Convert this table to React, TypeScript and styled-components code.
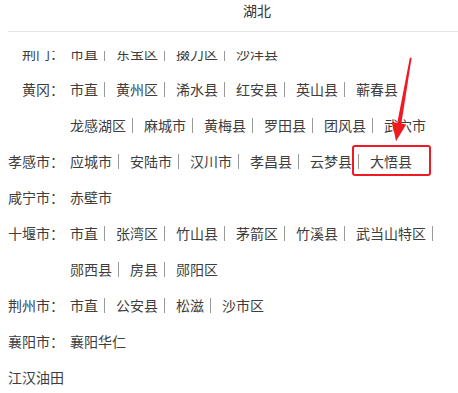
import React from 'react';
import styled, { createGlobalStyle } from 'styled-components';

interface District {
    name: string;
    noSep?: boolean;
    marked?: boolean;
}

interface City {
    label: string;
    districts: District[];
}

const d = (name: string, extra: Partial<District> = {}): District => ({ name, ...extra });

const CITIES: City[] = [
    { label: '荆门：', districts: [d('市直'), d('东宝区'), d('掇刀区'), d('沙洋县')] },
    {
        label: '黄冈：',
        districts: [
            d('市直'), d('黄州区'), d('浠水县'), d('红安县'), d('英山县'), d('蕲春县', { noSep: true }),
            d('龙感湖区'), d('麻城市'), d('黄梅县'), d('罗田县'), d('团风县'), d('武穴市'),
        ],
    },
    {
        label: '孝感市：',
        districts: [d('应城市'), d('安陆市'), d('汉川市'), d('孝昌县'), d('云梦县'), d('大悟县', { marked: true })],
    },
    { label: '咸宁市：', districts: [d('赤壁市')] },
    {
        label: '十堰市：',
        districts: [
            d('市直'), d('张湾区'), d('竹山县'), d('茅箭区'), d('竹溪县'), d('武当山特区'),
            d('郧西县'), d('房县'), d('郧阳区'),
        ],
    },
    { label: '荆州市：', districts: [d('市直'), d('公安县'), d('松滋'), d('沙市区')] },
    { label: '襄阳市：', districts: [d('襄阳华仁')] },
    { label: '江汉油田', districts: [] },
];

const App = (): JSX.Element => {
    const renderDistricts = (districts: District[]) => {
        return districts.map((item, i) => {
            const last = i === districts.length - 1;
            return (
                <DistrictItem key={item.name + i} $marked={item.marked}>
                    {item.name}
                    {!last && !item.noSep && <Sep />}
                </DistrictItem>
            );
        });
    };

    return (
        <>
            <GlobalStyle />
            <Page>
                <Panel>
                    <Header>湖北</Header>

                    <Viewport>
                        <List>
                            {CITIES.map((city) => (
                                <Row key={city.label}>
                                    <Label>{city.label}</Label>
                                    <Districts>{renderDistricts(city.districts)}</Districts>
                                </Row>
                            ))}
                        </List>
                    </Viewport>
                </Panel>

                {/* hand-drawn pointer towards the boxed county */}
                <Arrow viewBox="0 0 458 393" width={458} height={393}>
                    <polygon
                        points="409.9,57.6 411.6,57.9 401.4,123.4 406.2,124.4 396,141.2 392.1,121.9 397.3,122.8"
                        fill="#ee1b22"
                    />
                </Arrow>
            </Page>
        </>
    );
};

const GlobalStyle = createGlobalStyle`
    html, body {
        margin: 0;
        padding: 0;
        background: #fff;
        overflow: hidden;
    }

    body {
        font-family: "Noto Sans CJK SC", "Noto Sans", sans-serif;
    }
`;

const Page = styled.div`
    position: relative;
    width: 458px;
    height: 393px;
    overflow: hidden;
`;

const Panel = styled.div`
    margin-left: 8px;
    width: 498px;
`;

const Header = styled.div`
    height: 31px;
    line-height: 20px;
    font-size: 14px;
    color: #333;
    text-align: center;
    border-bottom: 1px solid #e5e5e5;
`;

const Viewport = styled.div`
    margin-top: 19px;
    height: 342px;
    overflow: hidden;
`;

const List = styled.div`
    margin-top: -16px;
`;

const Row = styled.div`
    display: flex;
    align-items: flex-start;
`;

const Label = styled.div`
    flex: none;
    width: 56px;
    margin-right: 6px;

    line-height: 36px;
    font-size: 14px;
    color: #3d3d3d;
    text-align: right;
    white-space: nowrap;
`;

const Districts = styled.div`
    display: flex;
    flex-wrap: wrap;
    width: 378px;
`;

const DistrictItem = styled.span<{ $marked?: boolean }>`
    position: relative;
    display: inline-flex;
    align-items: center;
    height: 36px;

    font-size: 14px;
    color: #3d3d3d;
    white-space: nowrap;

    ${(p) => p.$marked && `
        &::after {
            content: '';
            position: absolute;
            left: -18px;
            right: -19px;
            top: 2px;
            bottom: 3px;
            border: 2px solid #ee1b22;
            border-radius: 3px;
        }
    `}
`;

const Sep = styled.i`
    display: inline-block;
    width: 1px;
    height: 15px;
    margin: 0 11px 0 6px;
    background: #999;
`;

const Arrow = styled.svg`
    position: absolute;
    left: 0;
    top: 0;
    pointer-events: none;
`;

export default App;
